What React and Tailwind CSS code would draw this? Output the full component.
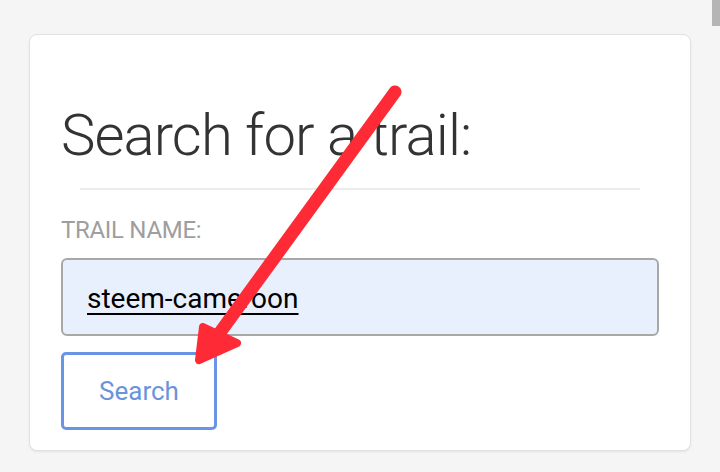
import React from 'react';

const Arrow = () => (
  <svg
    className="absolute inset-0 pointer-events-none"
    width="720"
    height="472"
    viewBox="0 0 720 472"
  >
    <line
      x1="395"
      y1="92"
      x2="216"
      y2="338"
      stroke="#fe2a35"
      strokeWidth="13"
      strokeLinecap="round"
    />
    <polygon
      points="199,360 203,327 237,343"
      fill="#fe2a35"
      stroke="#fe2a35"
      strokeWidth="8"
      strokeLinejoin="round"
    />
  </svg>
);

export default function App() {
  return (
    <div
      className="relative w-[720px] h-[472px] bg-[#f5f5f5] pt-[34px] pl-[29px] overflow-hidden"
      style={{ fontFamily: 'Roboto, "Liberation Sans", sans-serif' }}
    >
      {/* Card */}
      <div className="w-[662px] h-[417px] bg-white border border-[#e2e2e2] rounded-[8px] shadow-[0_1px_2px_rgba(0,0,0,0.08)] px-[31px] pt-[66px]">
        <h1 className="text-[58px] leading-[68px] font-light text-[#333333] tracking-[-0.9px]">
          Search for a trail:
        </h1>
        <div className="mx-[19px] mt-[19px] h-[2px] bg-[#ececec]" />

        <label className="block mt-[26px] text-[24px] leading-[28px] text-[#9e9e9e] tracking-[-0.3px]">
          TRAIL NAME:
        </label>

        <div className="mt-[14px] h-[78px] bg-[#e8f0fe] border-2 border-[#a8a8a8] rounded-[6px] flex items-center pl-[24px]">
          <span className="text-[28px] leading-none text-black underline decoration-2 underline-offset-[5px] pt-[4px]">
            steem-cameroon
          </span>
        </div>

        <button className="mt-[16px] w-[156px] h-[78px] border-[3px] border-[#6a95e4] rounded-[5px] bg-white text-[26px] text-[#6a93dc] flex items-center justify-center">
          Search
        </button>
      </div>

      {/* scrollbar thumb */}
      <div className="absolute top-0 right-0 w-[8px] h-[26px] bg-[#b5b5b5]" />

      <Arrow />
    </div>
  );
}
